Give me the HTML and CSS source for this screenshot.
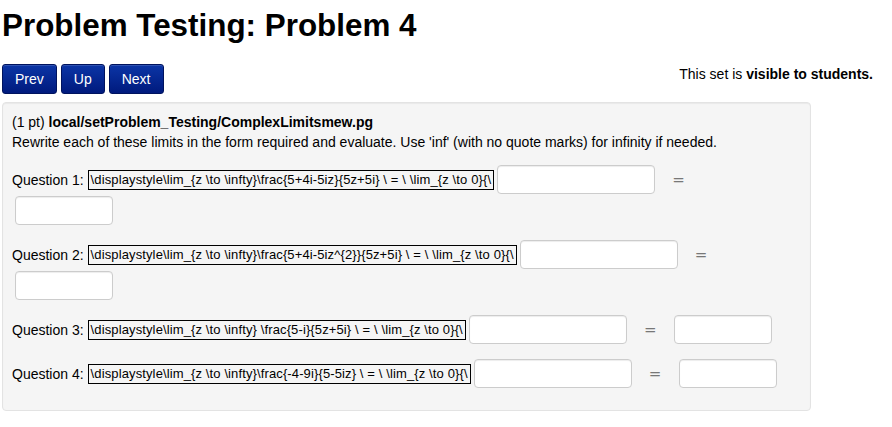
FILE: index.html
```html
<!DOCTYPE html>
<html>
<head>
<meta charset="utf-8">
<link rel="stylesheet" href="styles.css">
</head>
<body>
<div class="page">
  <h1 class="title">Problem Testing: Problem 4</h1>
  <div class="navrow">
    <div class="navbtns">
      <a class="btn">Prev</a>
      <a class="btn">Up</a>
      <a class="btn">Next</a>
    </div>
    <div class="visibility">This set is <b>visible to students.</b></div>
  </div>
  <div class="well">
    <div class="head">(1 pt) <b>local/setProblem_Testing/ComplexLimitsmew.pg</b></div>
    <div class="intro">Rewrite each of these limits in the form required and evaluate. Use 'inf' (with no quote marks) for infinity if needed.</div>

    <div class="q q1">
      <div class="line"><span class="label">Question 1:</span> <span class="tex">\displaystyle\lim_{z \to \infty}\frac{5+4i-5iz}{5z+5i} \ = \ \lim_{z \to 0}{\</span><span class="inp wide"></span><span class="eq">=</span></div>
      <div class="line wrap"><span class="inp small"></span></div>
    </div>

    <div class="q q2">
      <div class="line"><span class="label">Question 2:</span> <span class="tex">\displaystyle\lim_{z \to \infty}\frac{5+4i-5iz^{2}}{5z+5i} \ = \ \lim_{z \to 0}{\</span><span class="inp wide"></span><span class="eq">=</span></div>
      <div class="line wrap"><span class="inp small"></span></div>
    </div>

    <div class="q q3">
      <div class="line"><span class="label">Question 3:</span> <span class="tex">\displaystyle\lim_{z \to \infty} \frac{5-i}{5z+5i} \ = \ \lim_{z \to 0}{\</span><span class="inp wide"></span><span class="eq">=</span><span class="inp small"></span></div>
    </div>

    <div class="q q4">
      <div class="line"><span class="label">Question 4:</span> <span class="tex">\displaystyle\lim_{z \to \infty}\frac{-4-9i}{5-5iz} \ = \ \lim_{z \to 0}{\</span><span class="inp wide"></span><span class="eq">=</span><span class="inp small"></span></div>
    </div>
  </div>
</div>
</body>
</html>
```
FILE: styles.css
```css
html, body {
  margin: 0;
  padding: 0;
  background: #ffffff;
}
body {
  font-family: "Liberation Sans", Arial, sans-serif;
  font-size: 14px;
  line-height: 20px;
  color: #000;
}
.page {
  padding: 0 19px 0 2px;
}
.title {
  font-size: 31.4px;
  font-weight: bold;
  line-height: 40px;
  margin: 6px 0 0 0;
}
.navrow {
  display: flex;
  justify-content: space-between;
  align-items: flex-start;
  margin-top: 18px;
}
.navbtns {
  display: flex;
  gap: 4px;
}
.btn {
  display: block;
  padding: 4px 12px;
  color: #ffffff;
  font-size: 14px;
  line-height: 20px;
  border: 1px solid #00135e;
  border-radius: 3px;
  background: linear-gradient(#0b35a6, #001a7d);
  box-shadow: inset 0 1px 0 rgba(255,255,255,0.15);
}
.visibility {
  line-height: 20px;
}
.well {
  width: 789px;
  margin-top: 8px;
  background: #f5f5f5;
  border: 1px solid #e3e3e3;
  border-radius: 4px;
  box-shadow: inset 0 1px 1px rgba(0,0,0,0.05);
  padding: 9px 9px 22px 9px;
}
.head, .intro {
  line-height: 20px;
}
.q1 {
  margin-top: 13px;
}
.q + .q {
  margin-top: 15px;
}
.line {
  display: flex;
  align-items: center;
  white-space: nowrap;
}
.line.wrap {
  margin-top: 2px;
  margin-left: 3px;
}
.label {
  margin-right: 4px;
}
.tex {
  display: inline-block;
  border: 1px solid #000;
  font-size: 13px;
  letter-spacing: 0.12px;
  line-height: 18px;
  padding: 0 2px;
  background: #f5f5f5;
}
.inp {
  display: inline-block;
  height: 27px;
  background: #fff;
  border: 1px solid #cccccc;
  border-radius: 4px;
  box-shadow: inset 0 1px 1px rgba(0,0,0,0.075);
}
.inp.wide {
  width: 156px;
  margin-left: 3px;
}
.inp.small {
  width: 96px;
}
.eq {
  font-family: "DejaVu Sans", sans-serif;
  font-size: 15px;
  color: #777;
  margin: 0 17px 0 17px;
  width: 13px;
  text-align: center;
}
```
